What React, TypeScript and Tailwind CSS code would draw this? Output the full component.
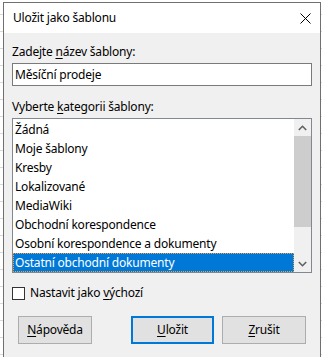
import React from "react";

const items = [
  "Žádná",
  "Moje šablony",
  "Kresby",
  "Lokalizované",
  "MediaWiki",
  "Obchodní korespondence",
  "Osobní korespondence a dokumenty",
  "Ostatní obchodní dokumenty",
];

function Chevron({ up }: { up?: boolean }) {
  return (
    <svg width="9" height="6" viewBox="0 0 9 6" className="block">
      <path
        d={up ? "M0.8 5 L4.5 1.3 L8.2 5" : "M0.8 1 L4.5 4.7 L8.2 1"}
        fill="none"
        stroke="#606060"
        strokeWidth="1.6"
      />
    </svg>
  );
}

export default function App() {
  return (
    <div className="w-[322px] h-[357px] overflow-hidden bg-white bg-[repeating-linear-gradient(to_bottom,#ffffff_0px,#ffffff_14px,#d9d9d9_14px,#d9d9d9_15px,#ffffff_15px,#ffffff_17px)] pt-[2px] pl-[3px] font-['Noto_Sans',sans-serif] text-[12px] tracking-[-0.2px] text-black">
      <div className="w-[318px] h-[380px] border border-b-0 border-[#707070] bg-[#f0f0f0] flex flex-col">
        <div className="h-[30px] bg-white flex items-center justify-between pl-[9px] pr-[9px]">
          <span className="leading-[16px]">Uložit jako šablonu</span>
          <svg width="11" height="11" viewBox="0 0 11 11" className="block">
            <path d="M0.5 0.5 L10.5 10.5 M10.5 0.5 L0.5 10.5" stroke="#000" strokeWidth="1" />
          </svg>
        </div>
        <div className="px-[8px] pt-[11px] flex flex-col">
          <div className="leading-[16px]">
            Zadejte <u className="underline-offset-2">n</u>ázev šablony:
          </div>
          <div className="mt-[3px] h-[23px] w-[300px] border border-[#7a7a7a] bg-white flex items-center pl-[2px] leading-[16px]">
            Měsíční prodeje
          </div>
          <div className="mt-[13px] leading-[16px]">
            Vyberte <u className="underline-offset-2">k</u>ategorii šablony:
          </div>
          <div className="mt-[3px] h-[155px] w-[300px] border border-[#828790] bg-white flex py-px pl-0">
            <div className="flex-1 flex flex-col">
              {items.map((t, i) =>
                i === items.length - 1 ? (
                  <div
                    key={t}
                    className="h-[19px] leading-[17px] bg-[#0078d7] text-white pl-[1px] border border-dotted border-[#f0a43a]"
                  >
                    {t}
                  </div>
                ) : (
                  <div key={t} className="h-[19px] leading-[19px] pl-[2px]">
                    {t}
                  </div>
                )
              )}
            </div>
            <div className="w-[17px] flex flex-col bg-[#f0f0f0] -mt-px -mb-px">
              <div className="h-[17px] flex items-center justify-center">
                <Chevron up />
              </div>
              <div className="flex-1">
                <div className="h-[91px] bg-[#cdcdcd]" />
              </div>
              <div className="h-[17px] flex items-center justify-center">
                <Chevron />
              </div>
            </div>
          </div>
          <div className="mt-[12px] flex items-center h-[16px]">
            <div className="w-[13px] h-[13px] border border-[#333333] bg-white" />
            <span className="ml-[5px] leading-[16px]">
              Nastavit jako <u className="underline-offset-2">v</u>ýchozí
            </span>
          </div>
          <div className="mt-[15px] flex px-[6px]">
            <div className="w-[74px] h-[28px] border border-[#adadad] bg-[#e1e1e1] flex items-center justify-center">
              <span>
                <u className="underline-offset-2">N</u>ápověda
              </span>
            </div>
            <div className="flex-1" />
            <div className="w-[83px] h-[28px] border-2 border-[#0078d7] bg-[#e1e1e1] flex items-center justify-center">
              <span>
                <u className="underline-offset-2">U</u>ložit
              </span>
            </div>
            <div className="w-[84px] h-[28px] ml-[8px] border border-[#adadad] bg-[#e1e1e1] flex items-center justify-center">
              <span>
                <u className="underline-offset-2">Z</u>rušit
              </span>
            </div>
          </div>
        </div>
      </div>
    </div>
  );
}
